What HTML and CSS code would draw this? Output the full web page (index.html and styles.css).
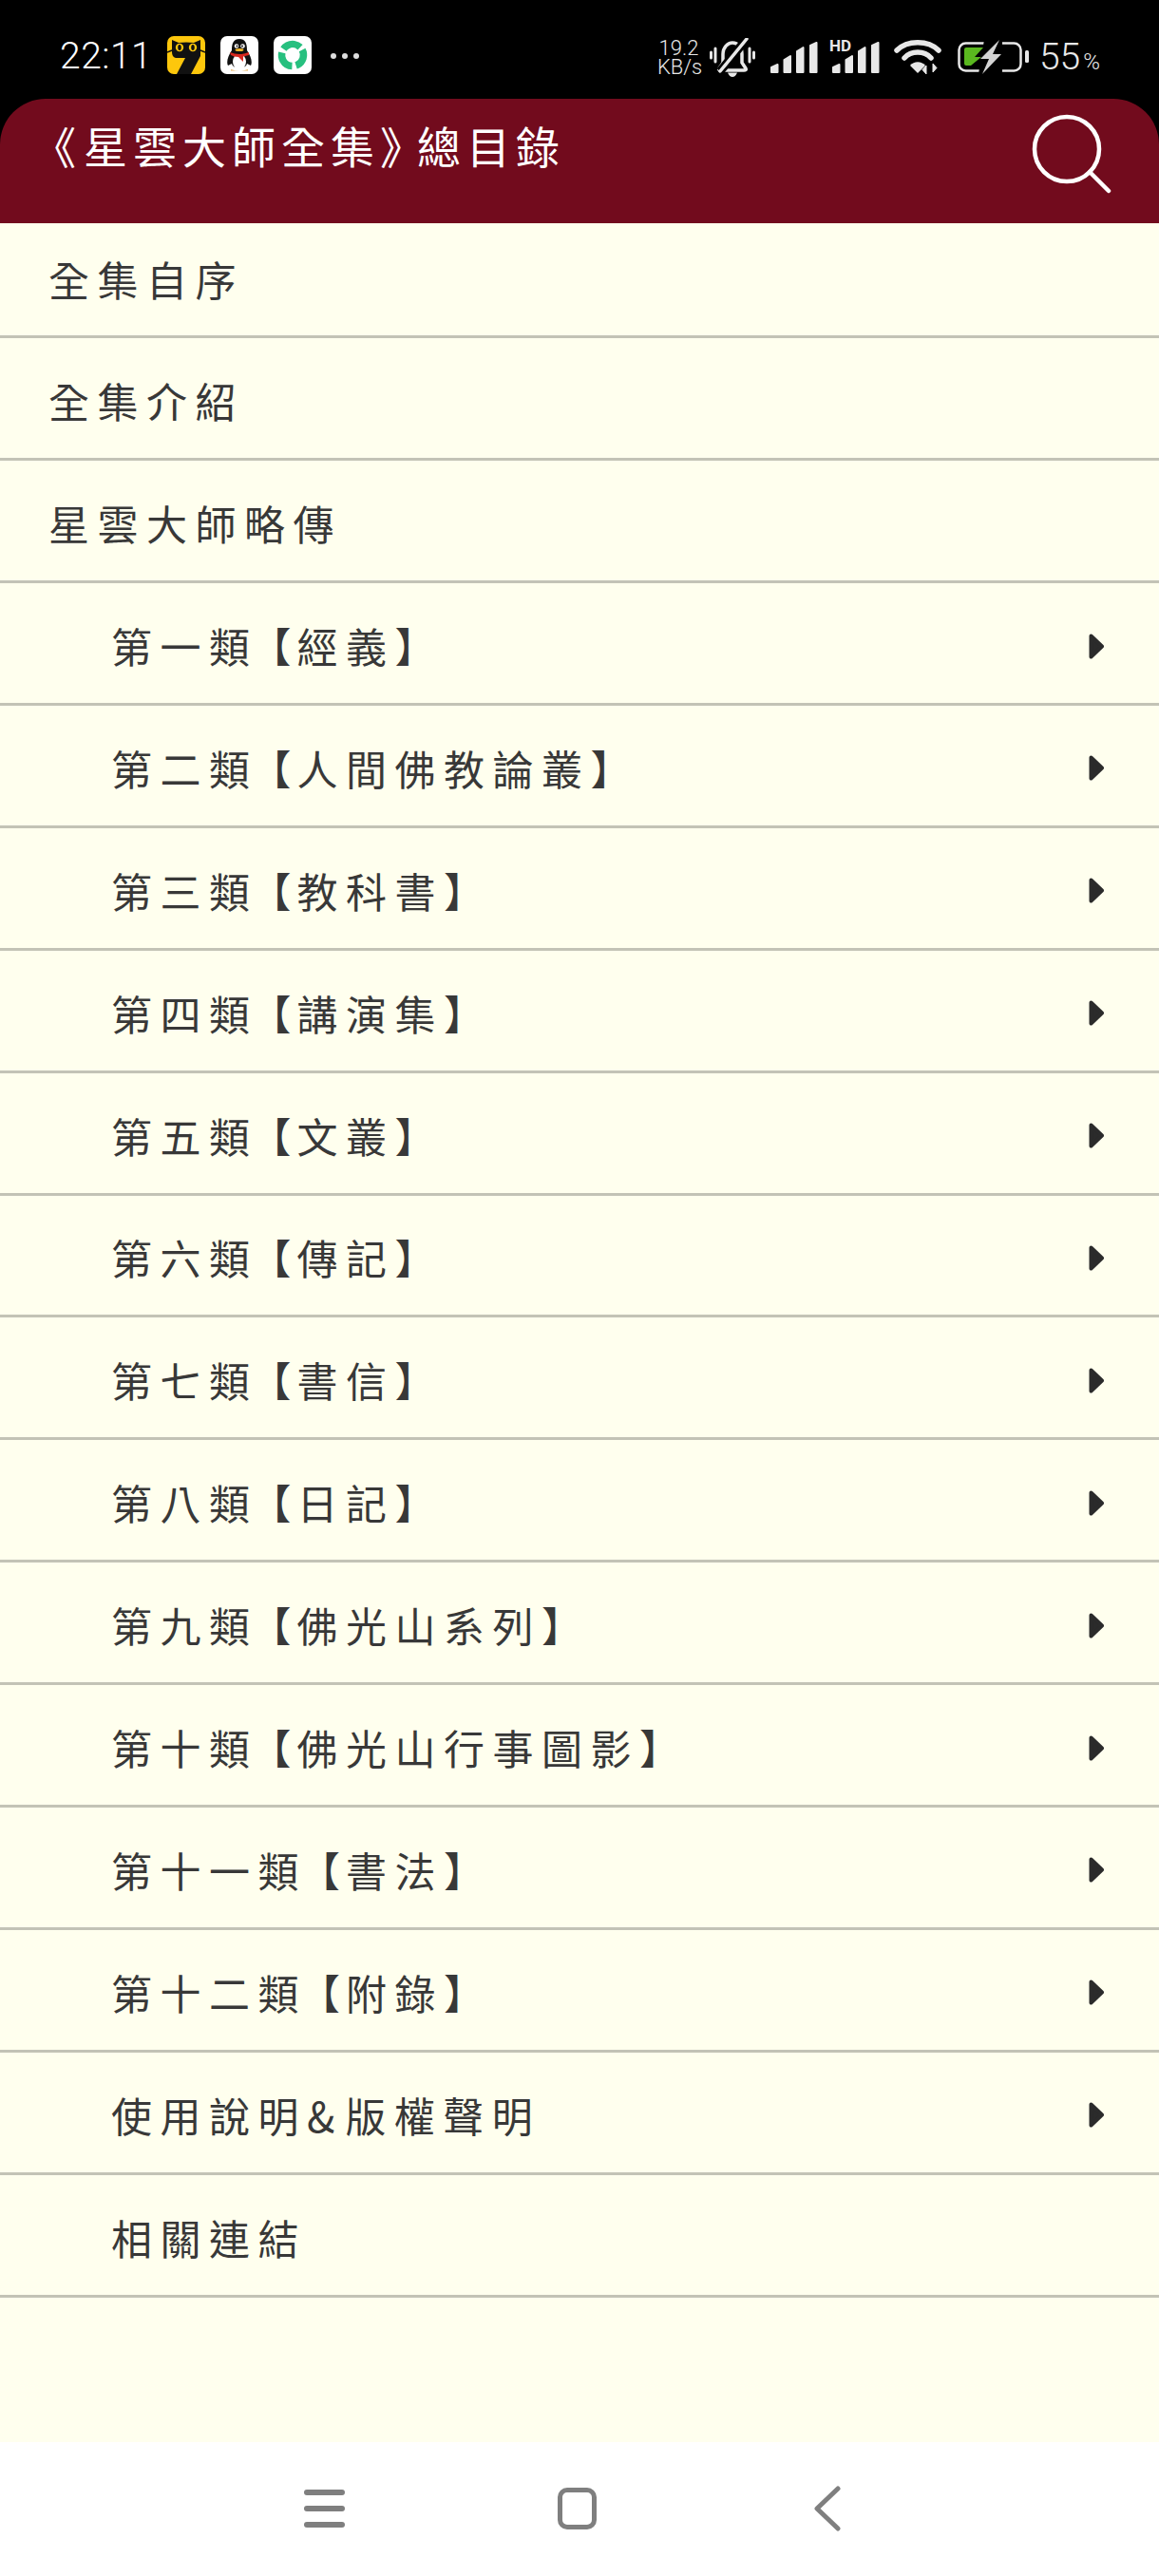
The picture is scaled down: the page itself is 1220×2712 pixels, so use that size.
FILE: index.html
```html
<!DOCTYPE html>
<html lang="zh-Hant">
<head>
<meta charset="utf-8">
<title>星雲大師全集總目錄</title>
<link rel="stylesheet" href="styles.css">
</head>
<body>
<svg class="defs" width="0" height="0"><defs><path id="tri" d="M2.500 2.500 L14 13.500 L2.500 24.500Z" fill="#2b2b2b" stroke="#2b2b2b" stroke-width="4" stroke-linejoin="round"/><path id="bars" d="M1 32 V27 L7.500 24 V32Z M14.500 32 V19 L21 15 V32Z M28 32 V10 L34.500 6 V32Z M42 32 V4 L48.500 1 V32Z" fill="#e8e8e8" stroke="#e8e8e8" stroke-width="2" stroke-linejoin="round"/></defs></svg>
<div class="phone">
  <div class="status">
    <div class="status-left">
      <span class="time">22:11</span>
      <svg class="app" viewBox="0 0 40 40"><rect width="40" height="40" rx="7" fill="#fdc70c"/><path d="M5 4 L12 7 Q20 6 28 7 L35 4 V21 L25 40 H10 L19 23 H9 Q5 22 5 17Z" fill="#111"/><circle cx="13" cy="12" r="4.200" fill="#fdc70c"/><circle cx="27" cy="12" r="4.200" fill="#fdc70c"/><ellipse cx="13" cy="12" rx="1.800" ry="3" fill="#111"/><ellipse cx="27" cy="12" rx="1.800" ry="3" fill="#111"/><path d="M0 17 L5 15 M40 17 L35 15" stroke="#111" stroke-width="1.500"/></svg>
      <svg class="app" viewBox="0 0 40 40"><rect width="40" height="40" rx="7" fill="#fff"/><path d="M20 3 C13 3 12 9 12 15 C8 21 6 27 8 31 L12 29 C13 35 27 35 28 29 L32 31 C34 27 32 21 28 15 C28 9 27 3 20 3Z" fill="#111"/><ellipse cx="20" cy="27" rx="7" ry="8" fill="#fff"/><circle cx="17" cy="10.500" r="2.300" fill="#fff"/><circle cx="23.500" cy="10.500" r="2.300" fill="#fff"/><circle cx="17.500" cy="10.500" r="1" fill="#111"/><circle cx="23" cy="10.500" r="1" fill="#111"/><ellipse cx="20" cy="14.500" rx="4.500" ry="1.600" fill="#f5b82a"/><path d="M10 17 Q20 21 30 17 L30 20 L24 21.500 L24 27 L19 22 Q14 22 11 20Z" fill="#d8281f"/><path d="M11 35 Q20 38 29 35 L29 36.500 H11Z" fill="#e8b35a"/></svg>
      <svg class="app" viewBox="0 0 40 40"><rect width="40" height="40" rx="7" fill="#fff"/><circle class="swirl" cx="20" cy="20" r="11.500" fill="none" stroke="#27c07f" stroke-width="7.500" stroke-dasharray="20 4.100"/></svg>
      <span class="dots"><i></i><i></i><i></i></span>
    </div>
    <div class="status-right">
      <span class="speed">19.2<br>KB/s</span>
      <svg class="bell" viewBox="0 0 48 41"><path d="M10 32 L14 26 V17 C14 10 19 5 24 5 C30 5 34 10 34 17 V26 L38 32 Q39 34 36 34 H12 Q9 34 10 32Z" fill="none" stroke="#e8e8e8" stroke-width="3.500"/><path d="M19 36.500 H29 Q27 41 24 41 Q21 41 19 36.500Z" fill="#e8e8e8"/><path d="M39 1 L11 35" stroke="#000" stroke-width="9"/><path d="M39 1 L11 35" stroke="#e8e8e8" stroke-width="3.500" stroke-linecap="round"/><path d="M6 11 V25 M1.500 15 V21 M42 11 V25 M46.500 15 V21" stroke="#e8e8e8" stroke-width="3" stroke-linecap="round"/></svg>
      <svg class="signal" viewBox="0 0 50 33"><use href="#bars"/></svg>
      <span class="hd"><b>HD</b><svg class="signal-hd" viewBox="0 0 50 33"><use href="#bars"/></svg></span>
      <svg class="wifi" viewBox="0 0 50 36"><path d="M3 11 C14 0 36 0 47 11" fill="none" stroke="#e8e8e8" stroke-width="5.500" stroke-linecap="round"/><path d="M11 19 C18 11 32 11 39 19" fill="none" stroke="#e8e8e8" stroke-width="5.500" stroke-linecap="round"/><path d="M17 27 C21 22 29 22 33 27 L25 35Z" fill="#e8e8e8"/><path d="M34 36 V27 L30 31.500 Z M41 25 V34 L45 29.500 Z" fill="#e8e8e8" stroke="#e8e8e8" stroke-width="1"/></svg>
      <svg class="battery" viewBox="0 0 75 36"><rect x="1.500" y="3.500" width="65" height="29" rx="7" fill="none" stroke="#e8e8e8" stroke-width="2.500"/><path d="M28 0 H47 V36 H22Z" fill="#000"/><path d="M9 8 H27 L18 18 H25 L14 27 H9 Q7 27 7 25 V10 Q7 8 9 8Z" fill="#5ab81f"/><path d="M44 0 L24 20 H33 L26 36 L46 15 H37Z" fill="#d4d4d4"/><rect x="71" y="11" width="4" height="13" rx="1.500" fill="#e8e8e8"/></svg>
      <span class="pct">55<small>%</small></span>
    </div>
  </div>

  <header class="title-bar">
    <h1 class="title"><span class="open-mark">《</span>星雲大師全集<span class="close-mark">》</span>總目錄</h1>
    <svg class="search" viewBox="0 0 84 84"><circle cx="37" cy="37" r="34" fill="none" stroke="#fff" stroke-width="4.500"/><path d="M61 61 L81 81" stroke="#fff" stroke-width="4.500" stroke-linecap="round"/></svg>
  </header>

  <main class="list">
    <div class="row first"><span>全集自序</span></div>
    <div class="row"><span>全集介紹</span></div>
    <div class="row"><span>星雲大師略傳</span></div>
    <div class="row sub"><span>第一類<b class="br">【</b>經義】</span><svg class="arrow" viewBox="0 0 16 27"><use href="#tri"/></svg></div>
    <div class="row sub"><span>第二類<b class="br">【</b>人間佛教論叢】</span><svg class="arrow" viewBox="0 0 16 27"><use href="#tri"/></svg></div>
    <div class="row sub"><span>第三類<b class="br">【</b>教科書】</span><svg class="arrow" viewBox="0 0 16 27"><use href="#tri"/></svg></div>
    <div class="row sub"><span>第四類<b class="br">【</b>講演集】</span><svg class="arrow" viewBox="0 0 16 27"><use href="#tri"/></svg></div>
    <div class="row sub"><span>第五類<b class="br">【</b>文叢】</span><svg class="arrow" viewBox="0 0 16 27"><use href="#tri"/></svg></div>
    <div class="row sub"><span>第六類<b class="br">【</b>傳記】</span><svg class="arrow" viewBox="0 0 16 27"><use href="#tri"/></svg></div>
    <div class="row sub"><span>第七類<b class="br">【</b>書信】</span><svg class="arrow" viewBox="0 0 16 27"><use href="#tri"/></svg></div>
    <div class="row sub"><span>第八類<b class="br">【</b>日記】</span><svg class="arrow" viewBox="0 0 16 27"><use href="#tri"/></svg></div>
    <div class="row sub"><span>第九類<b class="br">【</b>佛光山系列】</span><svg class="arrow" viewBox="0 0 16 27"><use href="#tri"/></svg></div>
    <div class="row sub"><span>第十類<b class="br">【</b>佛光山行事圖影】</span><svg class="arrow" viewBox="0 0 16 27"><use href="#tri"/></svg></div>
    <div class="row sub"><span>第十一類<b class="br">【</b>書法】</span><svg class="arrow" viewBox="0 0 16 27"><use href="#tri"/></svg></div>
    <div class="row sub"><span>第十二類<b class="br">【</b>附錄】</span><svg class="arrow" viewBox="0 0 16 27"><use href="#tri"/></svg></div>
    <div class="row sub"><span>使用說明<b class="amp">&amp;</b>版權聲明</span><svg class="arrow" viewBox="0 0 16 27"><use href="#tri"/></svg></div>
    <div class="row sub"><span>相關連結</span></div>
  </main>

  <nav class="navbar">
    <span class="nav-menu"><i></i><i></i><i></i></span>
    <span class="nav-home"></span>
    <svg class="nav-back" viewBox="0 0 30 48"><path d="M27 3 L5 24 L27 45" fill="none" stroke="#7f7f7f" stroke-width="5" stroke-linecap="round" stroke-linejoin="round"/></svg>
  </nav>
</div>
</body>
</html>
```
FILE: styles.css
```css
* { box-sizing: border-box; }
html, body { margin: 0; padding: 0; }
body { width: 1220px; height: 2712px; overflow: hidden; font-family: "Noto Sans CJK TC", "Noto Sans", sans-serif; }
.defs { display: block; height: 0; }
.phone { width: 1220px; height: 2712px; display: flex; flex-direction: column; background: #000; }

.status { height: 104px; flex: none; display: flex; justify-content: space-between; padding: 38px 62px 0 63px; color: #e8e8e8; }
.status-left { display: flex; align-items: flex-start; }
.time { font: 300 39px/42px Roboto, sans-serif; color: #fff; width: 113px; letter-spacing: 0.5px; }
.app { width: 40px; height: 40px; margin-right: 16px; display: block; }
.swirl { transform: rotate(-28deg); transform-origin: 20px 20px; }
.dots { display: flex; gap: 6px; margin: 18px 0 0 4px; }
.dots i { width: 6px; height: 6px; border-radius: 50%; background: #ddd; }
.status-right { display: flex; align-items: flex-start; }
.speed { font: 300 22px/20px Roboto, sans-serif; width: 45px; margin: 3px 10px 0 0; text-align: center; white-space: nowrap; }
.bell { width: 48px; height: 41px; margin: 2px 16px 0 0; }
.signal { width: 50px; height: 33px; margin: 6px 12px 0 0; }
.hd { position: relative; width: 53px; height: 39px; margin: 4px 15px 0 0; display: block; }
.hd b { position: absolute; left: 0; top: -2px; font: 700 17px/17px Roboto, sans-serif; }
.signal-hd { position: absolute; left: 3px; top: 2px; width: 50px; height: 33px; }
.wifi { width: 50px; height: 36px; margin: 4px 17px 0 0; }
.battery { width: 75px; height: 36px; margin: 4px 11px 0 0; }
.pct { font: 300 39px/44px Roboto, sans-serif; white-space: nowrap; }
.pct small { font-size: 24px; margin-left: 3px; }

.title-bar { height: 131px; flex: none; background: #720b1d; border-radius: 48px 48px 0 0; display: flex; align-items: flex-start; justify-content: space-between; padding: 16px 50px 0 34px; }
.title { margin: 0; font-size: 46px; line-height: 64px; font-weight: 400; color: #fff; letter-spacing: 6px; white-space: nowrap; }
.open-mark { letter-spacing: 8px; }
.close-mark { font-feature-settings: "halt"; margin-left: 0; letter-spacing: 16px; }
.search { width: 84px; height: 84px; flex: none; }

.list { flex: 1; background: #ffffee; }
.row { height: 128.9px; display: flex; align-items: center; justify-content: space-between; padding: 4px 58px 0 51px; border-bottom: 3px solid #c3c3b6; font-size: 43px; letter-spacing: 8.5px; color: #383838; white-space: nowrap; }
.row.first { height: 121.3px; padding: 0 58px 2px 51px; }
.row.sub { padding-left: 117px; }
.br { font-weight: 400; font-feature-settings: "halt"; margin-left: 13.5px; letter-spacing: 6px; }
.amp { font-weight: 400; letter-spacing: 11px; }
.arrow { width: 16px; height: 27px; margin-top: 2px; flex: none; }

.navbar { height: 141px; flex: none; background: #fff; display: flex; align-items: center; padding: 0 0 2px 320px; }
.nav-menu { width: 43px; height: 40px; display: flex; flex-direction: column; justify-content: space-between; margin-right: 224px; }
.nav-menu i { height: 6px; border-radius: 3px; background: #7f7f7f; }
.nav-home { width: 41px; height: 44px; border: 5px solid #7f7f7f; border-radius: 10px; margin-right: 227px; }
.nav-back { width: 30px; height: 48px; }
```
